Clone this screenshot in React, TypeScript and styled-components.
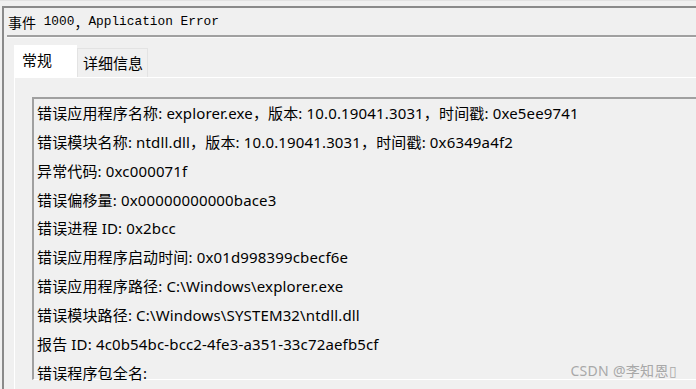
import React from 'react'
import styled, { createGlobalStyle } from 'styled-components'

const GlobalStyle = createGlobalStyle`
  html, body {
    margin: 0;
    padding: 0;
    background: #f0f0f0;
    overflow: hidden;
  }
`

const Page = styled.div`
  position: relative;
  width: 696px;
  height: 389px;
  padding: 5px 0 0 2px;
  box-sizing: border-box;
  border-top: 1px solid #e2e2e2;
  font-family: "Noto Sans", "Noto Sans CJK SC", sans-serif;
  color: #000;
  overflow: hidden;
`

const Frame = styled.div`
  height: 100%;
  border-top: 2px solid #8a8a8a;
  border-left: 2px solid #8a8a8a;
`

const TitleBar = styled.div`
  height: 27px;
  display: flex;
  align-items: center;
  padding-left: 4px;
  font-family: "Liberation Mono", "Noto Sans CJK SC", monospace;
  font-size: 12.8px;
  white-space: pre;
`

const TitleCjk = styled.span`
  font-family: "Noto Sans CJK SC", sans-serif;
  font-size: 14px;
`

const Separator = styled.div`
  margin-left: 3px;
  border-top: 2px solid #a0a0a0;
  border-bottom: 1px solid #fafafa;
`

const TabStrip = styled.div`
  display: flex;
  align-items: flex-end;
  margin-top: 7px;
  padding-left: 10px;
`

const Tab = styled.div<{ $active?: boolean }>`
  box-sizing: border-box;
  height: ${p => (p.$active ? 32 : 29)}px;
  padding: ${p => (p.$active ? '0 0 4px 8px' : '0 0 1px 5px')};
  width: ${p => (p.$active ? 63 : 71)}px;
  display: flex;
  align-items: center;
  background: ${p => (p.$active ? '#ffffff' : '#f0f0f0')};
  border: ${p => (p.$active ? 'none' : '1px solid #e3e3e3')};
  border-bottom: none;
  font-family: "Noto Sans CJK SC", sans-serif;
  font-size: 15px;
`

const Panel = styled.div`
  margin-left: 10px;
  height: 320px;
  border-top: 1px solid #ffffff;
  border-left: 1px solid #ffffff;
  padding: 19px 0 0 17px;
  box-sizing: border-box;
`

const TextBox = styled.div`
  height: 283px;
  box-sizing: border-box;
  border-top: 2px solid #a0a0a0;
  border-left: 2px solid #a0a0a0;
  border-bottom: 1px solid #ffffff;
  padding: 0 0 0 3px;
`

const Line = styled.div`
  height: 28.86px;
  line-height: 28.86px;
  font-size: 15px;
  letter-spacing: 0.15px;
  white-space: nowrap;
`

const Watermark = styled.div`
  position: absolute;
  right: 19px;
  bottom: 9px;
  font-family: "Noto Sans", "Noto Sans CJK SC", sans-serif;
  font-size: 14px;
  color: #a8a8a8;
  letter-spacing: 0.3px;
`

const lines = [
  '错误应用程序名称: explorer.exe，版本: 10.0.19041.3031，时间戳: 0xe5ee9741',
  '错误模块名称: ntdll.dll，版本: 10.0.19041.3031，时间戳: 0x6349a4f2',
  '异常代码: 0xc000071f',
  '错误偏移量: 0x00000000000bace3',
  '错误进程 ID: 0x2bcc',
  '错误应用程序启动时间: 0x01d998399cbecf6e',
  '错误应用程序路径: C:\\Windows\\explorer.exe',
  '错误模块路径: C:\\Windows\\SYSTEM32\\ntdll.dll',
  '报告 ID: 4c0b54bc-bcc2-4fe3-a351-33c72aefb5cf',
  '错误程序包全名:',
]

const App: React.FC = () => {
  return (
    <Page>
      <GlobalStyle />
      <Frame>
        <TitleBar>
          <TitleCjk>事件</TitleCjk> 1000<TitleCjk>，</TitleCjk>Application Error
        </TitleBar>
        <Separator />
        <TabStrip>
          <Tab $active>常规</Tab>
          <Tab>详细信息</Tab>
        </TabStrip>
        <Panel>
          <TextBox>
            {lines.map(l => (
              <Line key={l}>{l}</Line>
            ))}
          </TextBox>
        </Panel>
      </Frame>
      <Watermark>CSDN @李知恩▯</Watermark>
    </Page>
  )
}

export default App
